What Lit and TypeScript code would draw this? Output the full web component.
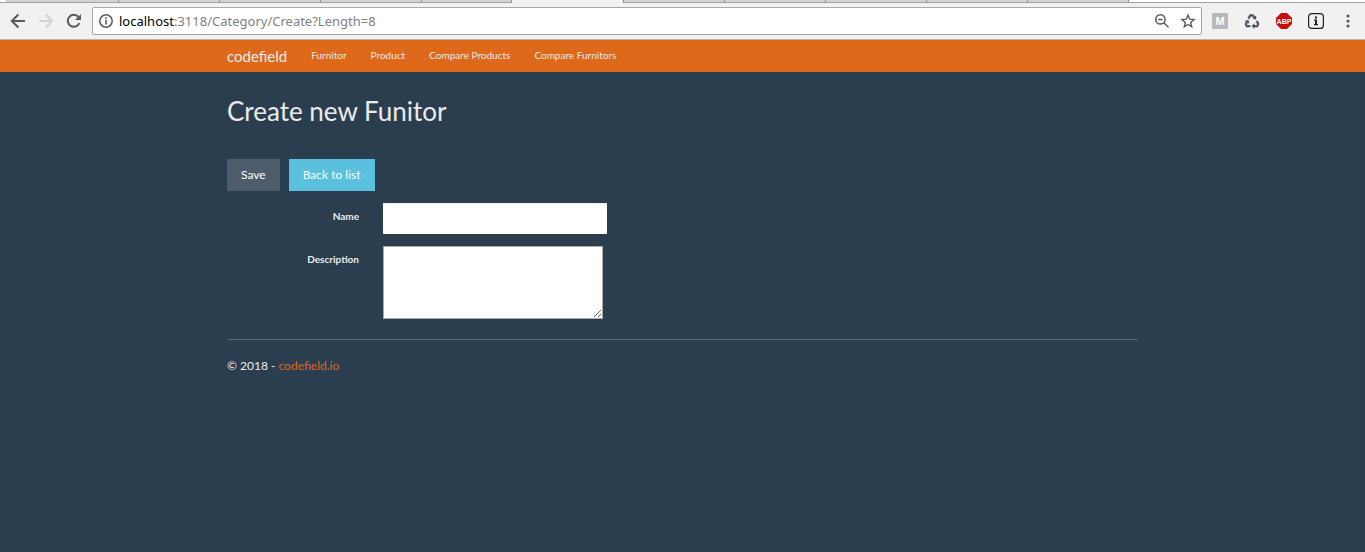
import { LitElement, html, css } from "lit";
import { customElement } from "lit/decorators.js";

@customElement("browser-bar")
class BrowserBar extends LitElement {
  static styles = css`
    :host { display: block; background: #f1f1f1; font-family: "Noto Sans", "Open Sans", sans-serif; }
    .tabs { display: flex; height: 3px; box-sizing: border-box; background: #fff; padding-left: 6px; border-bottom: 1px solid #a3a3a3; }
    .tab { width: 101px; box-sizing: border-box; background: #d2d2d2; border-right: 1px solid #8d8d8d; }
    .tab.first { width: 113px; }
    .tab.last { width: 90px; }
    .tab.active { width: 112px; height: 3px; background: #f1f1f1; }
    .bar { display: flex; align-items: center; height: 36px; border-bottom: 1px solid #b6b6b6; }
    button { display: flex; align-items: center; justify-content: center; width: 28px; height: 28px; padding: 0; border: 0; background: none; flex: none; }
    svg { display: block; }
    .history { display: flex; padding: 0 4px; }
    .address { display: flex; flex: 1; align-items: center; box-sizing: border-box; height: 28px; background: #fff; border: 1px solid #a6a6a6; border-radius: 2px; }
    .url { flex: 1; font-size: 13px; line-height: 20px; color: #808080; white-space: nowrap; outline: none; }
    .host { color: #000; }
    .address button { width: 26px; height: 26px; }
    .extensions { display: flex; padding: 0 1px 0 2px; }
    .extensions button { width: 32px; }
    .glyph { font-family: "Liberation Sans", sans-serif; font-weight: bold; }
  `;
  render() {
    const tabs = ["first", "", "", "", "last", "active", "", "", "", "", ""];
    return html`
      <div class="tabs">${tabs.map((t) => html`<div class="tab ${t}"></div>`)}</div>
      <div class="bar">
        <div class="history">
          <button aria-label="Back"><svg width="16" height="16" viewBox="0 0 16 16" fill="none" stroke="#5a5a5a" stroke-width="2"><path d="M15 8H2.5M8.3 1.5L1.8 8l6.5 6.5"/></svg></button>
          <button aria-label="Forward"><svg width="16" height="16" viewBox="0 0 16 16" fill="none" stroke="#d2d2d2" stroke-width="2"><path d="M1 8h12.5M7.7 1.5L14.2 8l-6.5 6.5"/></svg></button>
          <button aria-label="Reload"><svg width="16" height="16" viewBox="0 0 16 16"><path d="M13.3 10.2A6 6 0 1 1 12.4 3.9" fill="none" stroke="#5a5a5a" stroke-width="2"/><path d="M15 1v6H9z" fill="#5a5a5a"/></svg></button>
        </div>
        <div class="address">
          <button aria-label="Site information"><svg width="16" height="16" viewBox="0 0 16 16"><circle cx="8" cy="8" r="6.2" fill="none" stroke="#5a5a5a" stroke-width="1.5"/><path d="M7.2 7h1.6v4.5H7.2zM7.2 4.3h1.6v1.6H7.2z" fill="#5a5a5a"/></svg></button>
          <div class="url" role="textbox" aria-label="Address" contenteditable="true" spellcheck="false"><span class="host">localhost</span>:3118/Category/Create?Length=8</div>
          <button aria-label="Zoom"><svg width="16" height="16" viewBox="0 0 16 16" fill="none" stroke="#5a5a5a" stroke-width="1.5"><circle cx="6.4" cy="6.4" r="4.6"/><path d="M9.8 9.8l4.7 4.5M4.2 6.4h4.4"/></svg></button>
          <button aria-label="Bookmark"><svg width="16" height="16" viewBox="0 0 16 16" fill="none" stroke="#5a5a5a" stroke-width="1.4"><path d="M8 2.1l1.7 4.1 4.4.4-3.4 2.9 1 4.3L8 11.5l-3.7 2.3 1-4.3L1.9 6.6l4.4-.4z"/></svg></button>
        </div>
        <div class="extensions">
          <button aria-label="Mail extension"><svg width="16" height="16" viewBox="0 0 16 16"><rect width="16" height="16" rx="1" fill="#b8b8b8"/><text class="glyph" x="8" y="12" text-anchor="middle" font-size="11" fill="#fff">M</text></svg></button>
          <button aria-label="Recycle extension"><svg width="16" height="16" viewBox="0 0 16 16"><g fill="none" stroke="#4b5663" stroke-width="2.2"><path d="M4.4 5.6L6.3 2.4h2.5l1.5 2.3"/><path d="M12.6 8l1.7 2.9-1.1 2.3H10"/><path d="M6.4 13.2H2.8l-1-2.1 1.3-2.3"/></g><path d="M12.2 2.6v4.2l-3.8-1.6zM10.4 10.2v5.8L7.6 13.1zM.6 7.8l4-.8.8 3.8z" fill="#4b5663"/></svg></button>
          <button aria-label="Ad blocker"><svg width="16" height="16" viewBox="0 0 16 16"><path d="M5 0h6l5 5v6l-5 5H5l-5-5V5z" fill="#c70d0d"/><text class="glyph" x="8" y="10.6" text-anchor="middle" font-size="7" fill="#fff">ABP</text></svg></button>
          <button aria-label="Page details"><svg width="16" height="16" viewBox="0 0 16 16"><rect x=".6" y=".6" width="14.8" height="14.8" rx="3" fill="none" stroke="#222" stroke-width="1.2"/><path d="M7 3.5h2v2H7zM6 6.5h3V11h1v1.3H6V11h1V7.8H6z" fill="#222"/></svg></button>
          <button aria-label="Menu"><svg width="16" height="16" viewBox="0 0 16 16" fill="#5a5a5a"><circle cx="8" cy="3" r="1.6"/><circle cx="8" cy="8" r="1.6"/><circle cx="8" cy="13" r="1.6"/></svg></button>
        </div>
      </div>`;
  }
}

@customElement("app-root")
class AppRoot extends LitElement {
  static styles = css`
    :host { display: block; min-height: 100vh; background: #2b3e50; color: #ebebeb; font-family: Lato, sans-serif; font-size: 12px; line-height: 17px; }
    .container { max-width: 911px; margin: 0 auto; padding: 0 12px; }
    a { text-decoration: none; }
    .navbar { background: #df691a; }
    .navbar .container { display: flex; align-items: center; height: 32px; gap: 24px; }
    .navbar a { font-size: 10px; line-height: 16px; color: #ebebeb; padding-bottom: 2px; }
    .navbar .brand { font-size: 15px; padding: 0; }
    h2 { margin: 24px 0 32px; font-size: 26px; line-height: 31px; font-weight: 400; }
    .actions { display: flex; gap: 9px; margin-bottom: 12px; }
    .btn { box-sizing: border-box; height: 32px; padding: 0 14px; border: 0; background: #4e5d6c; color: #fff; font: 12px/32px Lato, sans-serif; }
    .btn.info { background: #5bc0de; }
    .group { display: grid; grid-template-columns: 132px 1fr; column-gap: 24px; align-items: start; justify-items: start; margin-bottom: 12px; }
    label { justify-self: end; padding-top: 6px; font-size: 10px; line-height: 14px; font-weight: 700; }
    input, textarea { display: block; box-sizing: border-box; margin: 0; background: #fff; border-radius: 0; font: 12px/17px Lato, sans-serif; color: #2b3e50; }
    input { width: 224px; max-width: 100%; height: 31px; padding: 6px 12px; border: 0; box-shadow: inset 0 1px 1px rgba(0, 0, 0, 0.075); }
    textarea { width: 220px; height: 73px; padding: 2px; border: 1px solid #a9a9a9; }
    hr { margin: 20px 0 17px; border: 0; border-top: 1px solid #596a7b; }
    p { margin: 0; }
    p a { color: #df691a; }
  `;
  render() {
    return html`
      <browser-bar></browser-bar>
      <nav class="navbar">
        <div class="container">
          <a class="brand" href="#">codefield</a>
          ${["Furnitor", "Product", "Compare Products", "Compare Furnitors"].map((t) => html`<a href="#">${t}</a>`)}
        </div>
      </nav>
      <main class="container">
        <h2>Create new Funitor</h2>
        <form @submit=${(e: Event) => e.preventDefault()}>
          <div class="actions">
            <button class="btn" type="submit">Save</button>
            <a class="btn info" href="#">Back to list</a>
          </div>
          <div class="group"><label for="name">Name</label><input id="name" type="text"></div>
          <div class="group"><label for="description">Description</label><textarea id="description"></textarea></div>
        </form>
        <hr>
        <footer><p>© 2018 - <a href="#">codefield.io</a></p></footer>
      </main>`;
  }
}
